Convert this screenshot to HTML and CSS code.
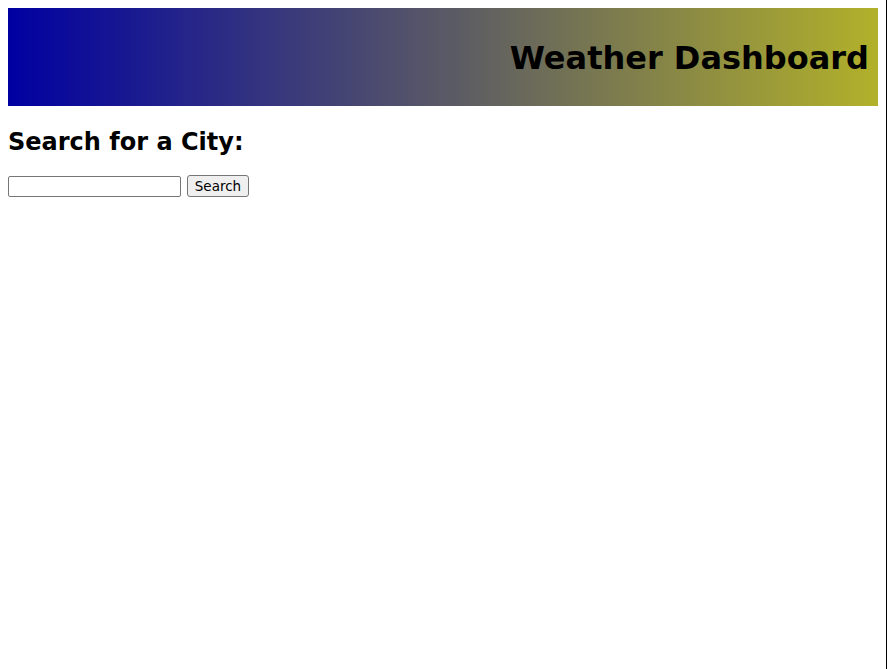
FILE: index.html
```html
<!DOCTYPE html>
<html lang="en">
<head>
<meta charset="utf-8">
<title>Weather Dashboard</title>
<link rel="stylesheet" href="styles.css">
</head>
<body>
<header class="banner">
  <h1 class="banner-title">Weather Dashboard</h1>
</header>
<section class="search">
  <h2 class="search-title">Search for a City:</h2>
  <form class="search-form">
    <input class="search-input" type="text">
    <button class="search-button" type="button">Search</button>
  </form>
</section>
</body>
</html>
```
FILE: styles.css
```css
html {
  border-right: 1px solid #000;
  min-height: 100%;
}
body {
  margin: 8px;
  font-family: "DejaVu Sans", Verdana, sans-serif;
  color: #000;
}
.banner {
  box-sizing: border-box;
  height: 98px;
  display: flex;
  align-items: center;
  justify-content: flex-end;
  padding: 2px 9px 0 0;
  background: linear-gradient(to right, #0000a2, #b2b12a);
}
.banner-title {
  margin: 0;
  font-size: 32px;
  font-weight: bold;
}
.search-title {
  margin: 22px 0 0;
  font-size: 24px;
  font-weight: bold;
  line-height: 28px;
}
.search-form {
  margin-top: 19px;
  display: flex;
  align-items: center;
  gap: 6px;
}
.search-input {
  box-sizing: border-box;
  width: 173px;
  height: 21px;
  margin: 0;
  border: 1px solid #767676;
  border-radius: 2px;
  font-family: "DejaVu Sans", Verdana, sans-serif;
  font-size: 13px;
}
.search-button {
  box-sizing: border-box;
  width: 62px;
  height: 22px;
  padding: 1px 4px;
  margin: 0;
  font-family: "DejaVu Sans", Verdana, sans-serif;
  font-size: 13.5px;
  background: #efefef;
  border: 1px solid #767676;
  border-radius: 3px;
  color: #000;
}
```
